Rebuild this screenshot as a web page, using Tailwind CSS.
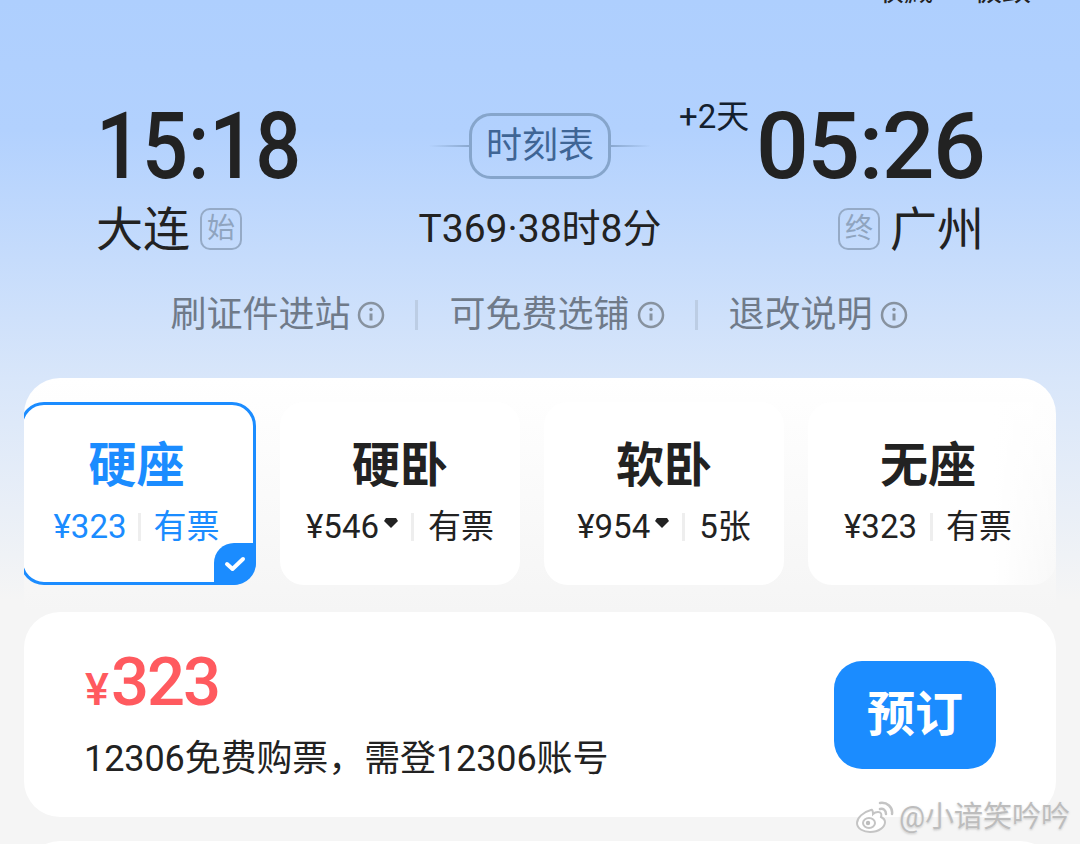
<!DOCTYPE html>
<html lang="zh">
<head>
  <meta charset="UTF-8" />
  <meta name="viewport" content="width=device-width, initial-scale=1.0" />
  <title>车次详情</title>
  <script src="https://cdn.jsdelivr.net/npm/@tailwindcss/browser@4"></script>
</head>
<body class="font-['Roboto','Noto_Sans_CJK_SC',sans-serif] text-[#222]">
  <div class="relative h-[844px] w-[1080px] overflow-hidden bg-[linear-gradient(to_bottom,#aecffe_0px,#b2d1fe_130px,#d8e6fa_378px,#f5f5f5_600px,#f5f5f5_844px)]">

    <!-- Cut off status text -->
    <div class="flex h-[6px] justify-end gap-[40px] overflow-hidden pr-[49px] text-[29px] leading-[6px] text-[#222]">
      <span class="-translate-y-[12px]">收藏</span>
      <span class="-translate-y-[12px]">极致</span>
    </div>

    <!-- Times -->
    <div class="flex h-[372px] flex-col px-[96px] pt-[90px]">
      <div class="flex h-[100px] items-center justify-between">
        <div class="w-[228px] origin-left scale-x-[0.87] text-[93px] leading-none font-medium">15:18</div>
        <div class="flex items-center">
          <div class="h-[2px] w-[40px] bg-gradient-to-r from-transparent to-[#8aa8cf]"></div>
          <div class="flex h-[66px] w-[142px] items-center justify-center rounded-[22px] border-[3px] border-[#86a5cb] text-[36px] text-[#3f6595]">时刻表</div>
          <div class="h-[2px] w-[40px] bg-gradient-to-l from-transparent to-[#8aa8cf]"></div>
        </div>
        <div class="relative w-[228px] text-right text-[93px] leading-none font-medium tracking-[-1.5px]">
          05:26
          <span class="absolute top-0 -left-[77px] text-[33px] leading-none font-normal tracking-normal text-[#14202e]">+2天</span>
        </div>
      </div>

      <div class="mt-[3px] flex h-[60px] items-center justify-between">
        <div class="flex items-center gap-[10px]">
          <span class="text-[47px] leading-none">大连</span>
          <span class="flex h-[42px] w-[42px] items-center justify-center rounded-[10px] border-2 border-[#95aac6] text-[28px] text-[#8fa4bf]">始</span>
        </div>
        <div class="text-[39px] leading-none">T369·38时8分</div>
        <div class="flex items-center gap-[10px]">
          <span class="flex h-[42px] w-[42px] items-center justify-center rounded-[10px] border-2 border-[#95aac6] text-[28px] text-[#8fa4bf]">终</span>
          <span class="text-[47px] leading-none">广州</span>
        </div>
      </div>

      <!-- Notes -->
      <div class="mt-[38px] -ml-[2px] flex items-center justify-center text-[36px] leading-none text-[#6f7a89]">
        <span>刷证件进站</span>
        <svg class="ml-[7px]" width="28" height="28" viewBox="0 0 28 28" fill="none" stroke="#87929f" stroke-width="2.500"><circle cx="14" cy="14" r="12"/><path d="M14 12.500v7" stroke-width="3"/><circle cx="14" cy="8.500" r="1.700" fill="#87929f" stroke="none"/></svg>
        <span class="mr-[31px] ml-[30px] h-[30px] w-[3px] bg-[#bccde4]"></span>
        <span>可免费选铺</span>
        <svg class="ml-[7px]" width="28" height="28" viewBox="0 0 28 28" fill="none" stroke="#87929f" stroke-width="2.500"><circle cx="14" cy="14" r="12"/><path d="M14 12.500v7" stroke-width="3"/><circle cx="14" cy="8.500" r="1.700" fill="#87929f" stroke="none"/></svg>
        <span class="mr-[31px] ml-[30px] h-[30px] w-[3px] bg-[#bccde4]"></span>
        <span>退改说明</span>
        <svg class="ml-[7px]" width="28" height="28" viewBox="0 0 28 28" fill="none" stroke="#87929f" stroke-width="2.500"><circle cx="14" cy="14" r="12"/><path d="M14 12.500v7" stroke-width="3"/><circle cx="14" cy="8.500" r="1.700" fill="#87929f" stroke="none"/></svg>
      </div>
    </div>

    <!-- Seat classes -->
    <div class="mx-[24px] h-[234px] overflow-hidden rounded-t-[36px] bg-gradient-to-b from-white to-[#f5f5f5]">
      <div class="flex gap-[24px] pt-[24px]">
        <div class="relative -ml-[4px] flex h-[183px] w-[236px] flex-col items-center rounded-[24px] border-[3px] border-[#1b8cff] bg-white pr-[3px] text-[#1b8cff]">
          <div class="mt-[33px] text-[48px] leading-[56px] font-bold">硬座</div>
          <div class="mt-[13px] flex items-center text-[33px] leading-[40px]">
            <span>¥323</span>
            <span class="mx-[12px] h-[28px] w-[3px] bg-[#eeeeee]"></span>
            <span>有票</span>
          </div>
          <div class="absolute -right-[3px] -bottom-[3px] flex h-[42px] w-[42px] items-center justify-center rounded-tl-[20px] rounded-br-[22px] bg-[#1b8cff]">
            <svg width="22" height="16" viewBox="0 0 22 16" fill="none" stroke="#fff" stroke-width="4" stroke-linecap="round" stroke-linejoin="round"><path d="M3 8l5.500 5L19 3"/></svg>
          </div>
        </div>

        <div class="flex h-[183px] w-[240px] flex-col items-center rounded-[24px] bg-white">
          <div class="mt-[36px] text-[48px] leading-[56px] font-bold">硬卧</div>
          <div class="mt-[13px] flex items-center text-[33px] leading-[40px]">
            <span>¥546</span>
            <svg class="mx-[5px] mb-[8px]" width="14" height="10" viewBox="0 0 14 10" fill="#222"><path d="M2 0h10l2 3-7 7-7-7z"/></svg>
            <span class="mx-[8px] h-[28px] w-[3px] bg-[#eeeeee]"></span>
            <span class="ml-[6px]">有票</span>
          </div>
        </div>

        <div class="flex h-[183px] w-[240px] flex-col items-center rounded-[24px] bg-white">
          <div class="mt-[36px] text-[48px] leading-[56px] font-bold">软卧</div>
          <div class="mt-[13px] flex items-center text-[33px] leading-[40px]">
            <span>¥954</span>
            <svg class="mx-[5px] mb-[8px]" width="14" height="10" viewBox="0 0 14 10" fill="#222"><path d="M2 0h10l2 3-7 7-7-7z"/></svg>
            <span class="mx-[8px] h-[28px] w-[3px] bg-[#eeeeee]"></span>
            <span class="ml-[6px]">5张</span>
          </div>
        </div>

        <div class="flex h-[183px] w-[248px] flex-col items-center rounded-[24px] bg-gradient-to-r from-white from-75% to-white/20 pr-[8px]">
          <div class="mt-[36px] text-[48px] leading-[56px] font-bold">无座</div>
          <div class="mt-[13px] flex items-center text-[33px] leading-[40px]">
            <span>¥323</span>
            <span class="mx-[13px] h-[28px] w-[3px] bg-[#eeeeee]"></span>
            <span>有票</span>
          </div>
        </div>
      </div>
    </div>

    <!-- Price card -->
    <div class="mx-[24px] flex h-[205px] items-center justify-between rounded-[36px] bg-white px-[60px]">
      <div>
        <div class="ml-[1px] flex items-baseline font-medium text-[#ff5a5f]">
          <span class="mr-[2px] text-[45px] leading-none">¥</span>
          <span class="text-[67px] leading-none tracking-[-2px]">323</span>
        </div>
        <div class="mt-[21px] text-[36px] leading-[44px] tracking-[-0.1px]">12306免费购票，需登12306账号</div>
      </div>
      <div class="flex h-[108px] w-[162px] items-center justify-center rounded-[28px] bg-[#1b8cff] text-[48px] font-bold text-white">预订</div>
    </div>

    <!-- Next card peeking -->
    <div class="mx-[24px] mt-[24px] h-[40px] rounded-t-[36px] bg-white"></div>

    <!-- Watermark -->
    <div class="absolute right-[10px] bottom-[11px] flex items-center gap-[5px] text-[29px] leading-none text-[#bdbdbd] [text-shadow:0_0_2px_#fff,0_1px_2px_#8888]">
      <svg width="38" height="32" viewBox="0 0 38 32" fill="none" stroke="#c4c4c4" stroke-width="2"><path d="M15 9C7 11 1 17 1 22c0 6 7 9 13 9 9 0 15-5 15-10 0-3-2-4-4-5 1-3 0-5-3-5-2 0-4 1-5 2 0-3-1-5-2-4z" fill="#fff"/><ellipse cx="13" cy="22" rx="6" ry="5"/><circle cx="12" cy="22" r="2.200" fill="#bdbdbd" stroke="none"/><path d="M24 8c3-1 6 1 6 5M24 2c7-1 13 4 12 11" stroke-width="2.500" stroke-linecap="round"/></svg>
      <span>@小谙笑吟吟</span>
    </div>
  </div>
</body>
</html>
